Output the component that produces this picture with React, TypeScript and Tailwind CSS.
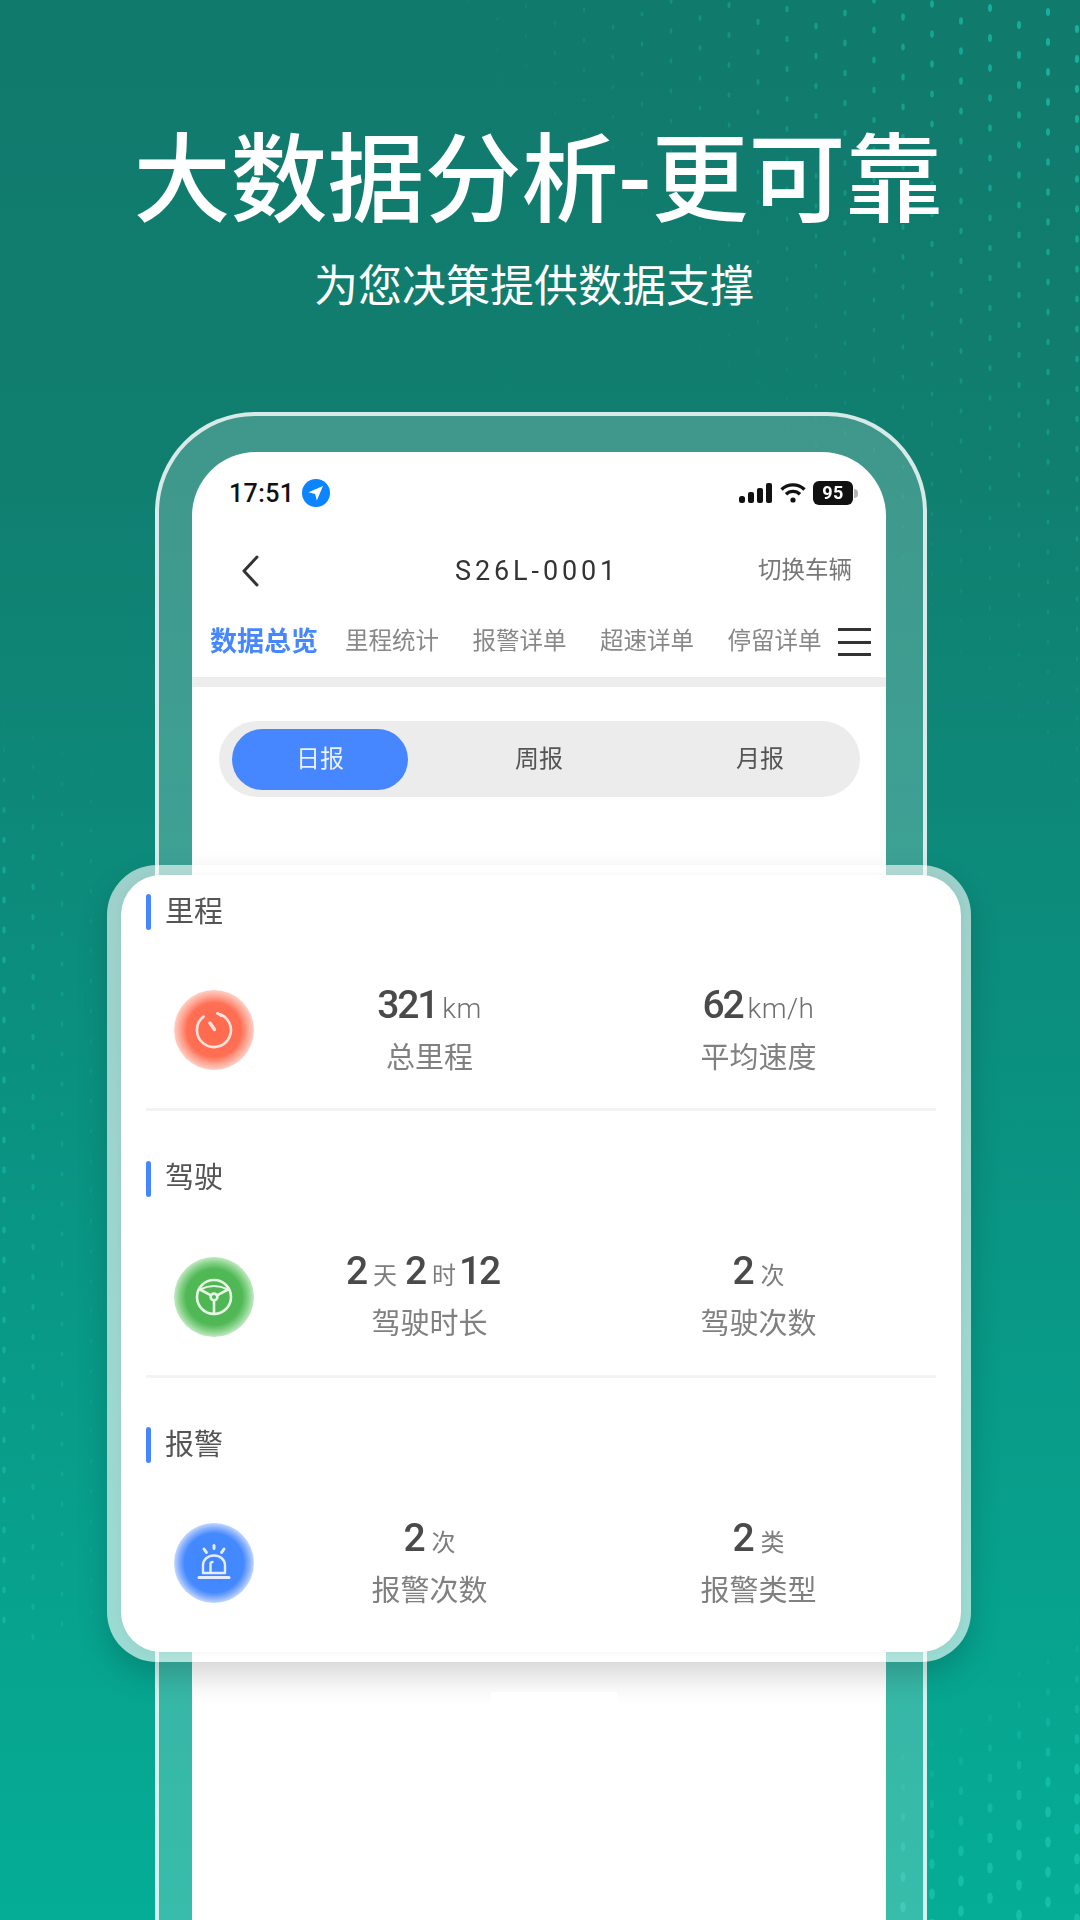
import React from 'react';

// background dot texture, brighter toward the corners
const makeDots = () => {
  const dots: { x: number; y: number; rx: number; ry: number; o: number }[] = [];
  for (let c = 0; c < 38; c++) {
    for (let r = 0; r < 66; r++) {
      const x = c * 29 + 4;
      const y = r * 30 + ((c * 17) % 30);
      const topRight = (x - 400) / 620 - y / 820;
      const left = y > 700 && y < 1640 ? (1 - x / 140) * Math.min((y - 700) / 160, 1) : 0;
      const bottomRight = (x - 850) / 230 + (y - 1760) / 170;
      const a = Math.min(Math.max(topRight * 0.7, left * 0.5, bottomRight * 0.6), 0.7);
      if (a <= 0.04) continue;
      const big = bottomRight > 0.2 ? 1.35 : 1;
      dots.push({ x, y, rx: (1 + 1.6 * a) * big, ry: (2 + 3 * a) * big, o: a });
    }
  }
  return dots;
};

const DOTS = makeDots();

const TABS = ['里程统计', '报警详单', '超速详单', '停留详单'];

const Unit = ({ children, className = '' }: { children: React.ReactNode; className?: string }) => (
  <span className={`text-[24px] font-normal tracking-normal text-[#7d7d7d] ${className}`}>{children}</span>
);

const LatinUnit = ({ children }: { children: React.ReactNode }) => (
  <span className="ml-[5px] text-[28px] font-light tracking-[0.5px] text-[#6f6f6f]">{children}</span>
);

const Num = ({ children }: { children: React.ReactNode }) => (
  <span className="text-[39px] font-medium tracking-[-2.2px] text-[#4a4a4a]">{children}</span>
);

const Stat = ({ value, label }: { value: React.ReactNode; label: string }) => (
  <div className="flex w-[329px] flex-col items-center">
    <div className="flex h-[44px] items-baseline leading-[44px]">{value}</div>
    <div className="mt-[11px] text-[29px] leading-[40px] text-[#808080]">{label}</div>
  </div>
);

const TimerIcon = () => (
  <svg width="40" height="40" viewBox="0 0 40 40" fill="none" stroke="#ffe3dc" strokeWidth="2.6" strokeLinecap="round">
    <path d="M23.5 3.4A17 17 0 1 1 9.5 6.6" />
    <path d="M23.5 3.4c2 .6 3 1.5 3.4 2.4" />
    <path d="M16 13l4.5 6.5" strokeWidth="3.4" />
  </svg>
);

const WheelIcon = () => (
  <svg width="40" height="40" viewBox="0 0 40 40" fill="none" stroke="#e6f7e4" strokeWidth="2.6" strokeLinecap="round">
    <circle cx="20" cy="20" r="17" />
    <circle cx="20" cy="20" r="3.4" />
    <path d="M6 12.5l11 5.8M34 12.5l-11 5.8M20 23.5V37" />
    <path d="M6 12.5Q20 5.5 34 12.5" strokeWidth="2" />
  </svg>
);

const SirenIcon = () => (
  <svg width="40" height="40" viewBox="0 0 40 40" fill="none" stroke="#e3edff" strokeWidth="2.4" strokeLinecap="round" strokeLinejoin="round">
    <path d="M9 30v-8a11 9.5 0 0 1 22 0v8z" />
    <path d="M16.5 29v-8a2 2 0 0 1 2-2" />
    <path d="M5 34.5h30" strokeWidth="3" />
    <path d="M20 2.5v3M10 6l2.4 3.4M30 6l-2.4 3.4" strokeWidth="3" />
  </svg>
);

const Section = ({
  title,
  iconBg,
  icon,
  left,
  right,
  divider = true,
}: {
  title: string;
  iconBg: string;
  icon: React.ReactNode;
  left: React.ReactNode;
  right: React.ReactNode;
  divider?: boolean;
}) => (
  <section>
    <div className="flex h-[36px] items-center">
      <div className="h-[36px] w-[5px] rounded-full bg-[#4686ff]" />
      <span className="ml-[14px] text-[29px] leading-none text-[#555555]">{title}</span>
    </div>
    <div className="mt-[60px] flex h-[80px] items-center pl-[28px]">
      <div className={`flex h-[80px] w-[80px] shrink-0 items-center justify-center rounded-full ${iconBg}`}>{icon}</div>
      <div className="ml-[11px] flex">
        {left}
        {right}
      </div>
    </div>
    {divider && <div className="mt-[38px] h-[3px] bg-[#f3f3f3]" />}
  </section>
);

export default function App() {
  return (
    <div className="relative h-[1920px] w-[1080px] overflow-hidden bg-[linear-gradient(180deg,#107a6d_0%,#107f70_25%,#0a9382_60%,#05ad96_100%)] font-['Roboto','Noto_Sans_CJK_SC',sans-serif]">
      <svg className="absolute inset-0" width="1080" height="1920" fill="#1cc6b0">
        {DOTS.map((d, i) => (
          <ellipse key={i} cx={d.x} cy={d.y} rx={d.rx} ry={d.ry} opacity={d.o} />
        ))}
      </svg>

      {/* Heading */}
      <div className="relative flex flex-col items-center pt-[125px] text-white">
        <h1 className="pr-[4px] text-[97px] font-medium leading-[112px]">大数据分析-更可靠</h1>
        <p className="mt-[20px] pr-[12px] text-[44px] leading-[60px]">为您决策提供数据支撑</p>
      </div>

      {/* Phone */}
      <div className="relative ml-[155px] mt-[95px] h-[1600px] w-[772px] rounded-t-[100px] border-[4px] border-white/80 bg-white/20 pl-[33px] pt-[36px]">
        <div className="h-[1560px] w-[694px] rounded-t-[64px] bg-white blur-[0.4px]">
          <div className="flex h-[82px] items-center pl-[37px] pr-[28px]">
            <span className="text-[25px] font-medium leading-none tracking-[0.4px] text-[#111111]">17:51</span>
            <svg className="ml-[8px]" width="28" height="28" viewBox="0 0 28 28">
              <circle cx="14" cy="14" r="14" fill="#0a84ff" />
              <path d="M21 7L6.5 13.2l6.6 1.7 1.7 6.6z" fill="#ffffff" />
            </svg>
            <svg className="ml-auto" width="33" height="20" viewBox="0 0 33 20" fill="#111111">
              <rect x="0" y="13" width="6" height="7" rx="2.5" />
              <rect x="9" y="9" width="6" height="11" rx="2" />
              <rect x="18" y="5" width="6" height="15" rx="2" />
              <rect x="27" y="0" width="6" height="20" rx="2" />
            </svg>
            <svg className="ml-[8px]" width="26" height="20" viewBox="0 0 26 20" fill="none" stroke="#111111" strokeWidth="3.4">
              <path d="M1.5 6.5a16.5 16.5 0 0 1 23 0" />
              <path d="M6 11.2a10 10 0 0 1 14 0" />
              <circle cx="13" cy="17" r="2.6" fill="#111111" stroke="none" />
            </svg>
            <div className="ml-[7px] flex h-[24px] w-[40px] items-center justify-center rounded-[6px] bg-[#111111] text-[18px] font-bold leading-none tracking-[0.5px] text-white">
              95
            </div>
            <div className="ml-[1px] h-[9px] w-[4px] rounded-r-full bg-[#b5b5b5]" />
          </div>

          <div className="flex h-[74px] items-center">
            <div className="w-[263px] pl-[49px]">
              <svg width="18" height="32" viewBox="0 0 18 32" fill="none" stroke="#333333" strokeWidth="3" strokeLinecap="round" strokeLinejoin="round">
                <path d="M16 2L3 16l13 14" />
              </svg>
            </div>
            <span className="text-[27px] leading-none tracking-[3.9px] text-[#333333]">S26L-0001</span>
            <span className="ml-auto pr-[34px] text-[23.5px] leading-none text-[#777777]">切换车辆</span>
          </div>

          <div className="flex h-[68px] items-center pl-[18px]">
            <span className="text-[27px] font-bold leading-none text-[#4686ff]">数据总览</span>
            <div className="ml-[27px] flex gap-[33.5px] text-[23.5px] leading-none text-[#888888]">
              {TABS.map((t) => (
                <span key={t}>{t}</span>
              ))}
            </div>
            <div className="ml-[16px] flex h-[28px] w-[33px] flex-col justify-between">
              <div className="h-[3px] bg-[#333333]" />
              <div className="h-[3px] bg-[#333333]" />
              <div className="h-[3px] bg-[#333333]" />
            </div>
          </div>

          <div className="mt-[1px] h-[10px] bg-[#ededed]" />

          <div className="ml-[27px] mt-[34px] flex h-[76px] w-[641px] items-center rounded-full bg-[#ececec] pl-[13px] text-[24px] text-[#555555]">
            <div className="flex h-[61px] w-[176px] items-center justify-center rounded-full bg-[#4686ff] text-[#eaf1ff]">日报</div>
            <div className="w-[262px] text-center">周报</div>
            <div className="w-[180px] text-center">月报</div>
          </div>
        </div>
      </div>

      {/* Overlay card */}
      <div className="absolute left-[107px] top-[865px] h-[797px] w-[864px] rounded-[50px] bg-white/60 pb-[10px] pl-[14px] pr-[10px] pt-[10px] shadow-[0_14px_30px_rgba(0,0,0,0.17)]">
        <div className="rounded-[40px] bg-white shadow-[0_0_8px_rgba(0,0,0,0.05)]">
          <div className="flex h-[777px] flex-col gap-[49.5px] px-[25px] pt-[19px] blur-[0.4px]">
            <Section
              title="里程"
              iconBg="bg-[radial-gradient(circle_closest-side,#ff6a4d_0%,#ff6f54_68%,#ffa390_84%,#ffd0c5_100%)]"
              icon={<TimerIcon />}
              left={<Stat value={<><Num>321</Num><LatinUnit>km</LatinUnit></>} label="总里程" />}
              right={<Stat value={<><Num>62</Num><LatinUnit>km/h</LatinUnit></>} label="平均速度" />}
            />
            <Section
              title="驾驶"
              iconBg="bg-[radial-gradient(circle_closest-side,#4db551_0%,#50b855_70%,#86d288_86%,#c3e9c4_100%)]"
              icon={<WheelIcon />}
              left={
                <Stat
                  value={
                    <>
                      <Num>2</Num>
                      <Unit className="ml-[7px] mr-[8px]">天</Unit>
                      <Num>2</Num>
                      <Unit className="ml-[7px] mr-[3px]">时</Unit>
                      <Num>12</Num>
                      <span className="w-[14px]" />
                    </>
                  }
                  label="驾驶时长"
                />
              }
              right={<Stat value={<><Num>2</Num><Unit className="ml-[8px]">次</Unit></>} label="驾驶次数" />}
            />
            <Section
              title="报警"
              divider={false}
              iconBg="bg-[radial-gradient(circle_closest-side,#4285ff_0%,#4489ff_74%,#86afff_88%,#c3d7ff_100%)]"
              icon={<SirenIcon />}
              left={<Stat value={<><Num>2</Num><Unit className="ml-[8px]">次</Unit></>} label="报警次数" />}
              right={<Stat value={<><Num>2</Num><Unit className="ml-[8px]">类</Unit></>} label="报警类型" />}
            />
          </div>
        </div>
      </div>

      {/* white patch sitting on the card's shadow */}
      <div className="absolute left-[491px] top-[1692px] h-[14px] w-[126px] bg-white" />
    </div>
  );
}
